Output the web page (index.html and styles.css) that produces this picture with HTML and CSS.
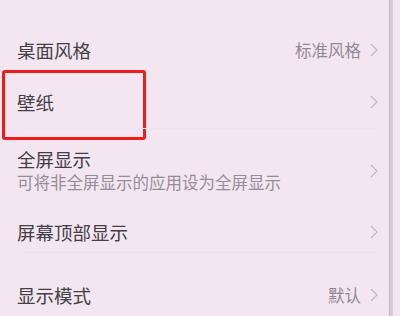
FILE: index.html
```html
<!DOCTYPE html>
<html lang="zh">
<head>
<meta charset="utf-8">
<link rel="stylesheet" href="styles.css">
</head>
<body>
<div class="screen">
  <div class="list">
    <div class="row row-cut"><span class="cut-text">显示设置</span></div>
    <div class="row row-a">
      <span class="title">桌面风格</span>
      <span class="end"><span class="value">标准风格</span><svg class="chev" viewBox="0 0 8 14"><polyline points="1,1 7,7 1,13"/></svg></span>
    </div>
    <div class="row row-a row-mark">
      <span class="title">壁纸</span>
      <span class="end"><svg class="chev" viewBox="0 0 8 14"><polyline points="1,1 7,7 1,13"/></svg></span>
      <div class="mark"></div>
    </div>
    <div class="row row-b">
      <div class="texts">
        <span class="title">全屏显示</span>
        <span class="sub">可将非全屏显示的应用设为全屏显示</span>
      </div>
      <span class="end"><svg class="chev" viewBox="0 0 8 14"><polyline points="1,1 7,7 1,13"/></svg></span>
    </div>
    <div class="row row-c">
      <span class="title">屏幕顶部显示</span>
      <span class="end"><svg class="chev" viewBox="0 0 8 14"><polyline points="1,1 7,7 1,13"/></svg></span>
    </div>
    <div class="row row-d">
      <span class="title">显示模式</span>
      <span class="end"><span class="value">默认</span><svg class="chev" viewBox="0 0 8 14"><polyline points="1,1 7,7 1,13"/></svg></span>
    </div>
  </div>
  <div class="bar"></div>
</div>
</body>
</html>
```
FILE: styles.css
```css
html, body {
  margin: 0;
  padding: 0;
  background: #f4e6f1;
  overflow: hidden;
}
body {
  font-family: "Noto Sans CJK SC", "Noto Sans", sans-serif;
  width: 400px;
  height: 316px;
}
.screen {
  display: flex;
  height: 316px;
  overflow: hidden;
}
.list {
  flex: 1;
  display: flex;
  flex-direction: column;
  margin-top: -21px;
  padding-left: 17px;
  padding-right: 11px;
}
.row {
  display: flex;
  align-items: center;
  justify-content: space-between;
  position: relative;
  flex-shrink: 0;
}
.row-cut {
  height: 45px;
  align-items: flex-start;
}
.cut-text {
  font-size: 16px;
  line-height: 22px;
  color: #a9a1a9;
  margin-left: 1px;
}
.row-a { height: 52px; }
.row-b { height: 83px; border-top: 1px solid #f0e2ee; }
.row-c { height: 40px; }
.row-d { height: 84px; border-top: 1px solid #efe0ec; }
.title {
  font-size: 18.5px;
  line-height: 23px;
  color: #423f45;
}
.texts {
  display: flex;
  flex-direction: column;
}
.sub {
  font-size: 16.5px;
  line-height: 23px;
  color: #938e96;
}
.end {
  display: flex;
  align-items: center;
  gap: 9px;
}
.value {
  font-size: 16.5px;
  line-height: 22px;
  color: #8f8a92;
}
.chev {
  width: 8px;
  height: 14px;
  fill: none;
  stroke: #c0b6bf;
  stroke-width: 1.2;
}
.mark {
  position: absolute;
  left: -15px;
  top: -6px;
  width: 138px;
  height: 64px;
  border: 3px solid #f01c1c;
  border-radius: 3px;
}
.bar {
  width: 3px;
  margin-right: 7px;
  background: #d5cbd3;
  border-left: 1px solid #c4b9c2;
}
```
